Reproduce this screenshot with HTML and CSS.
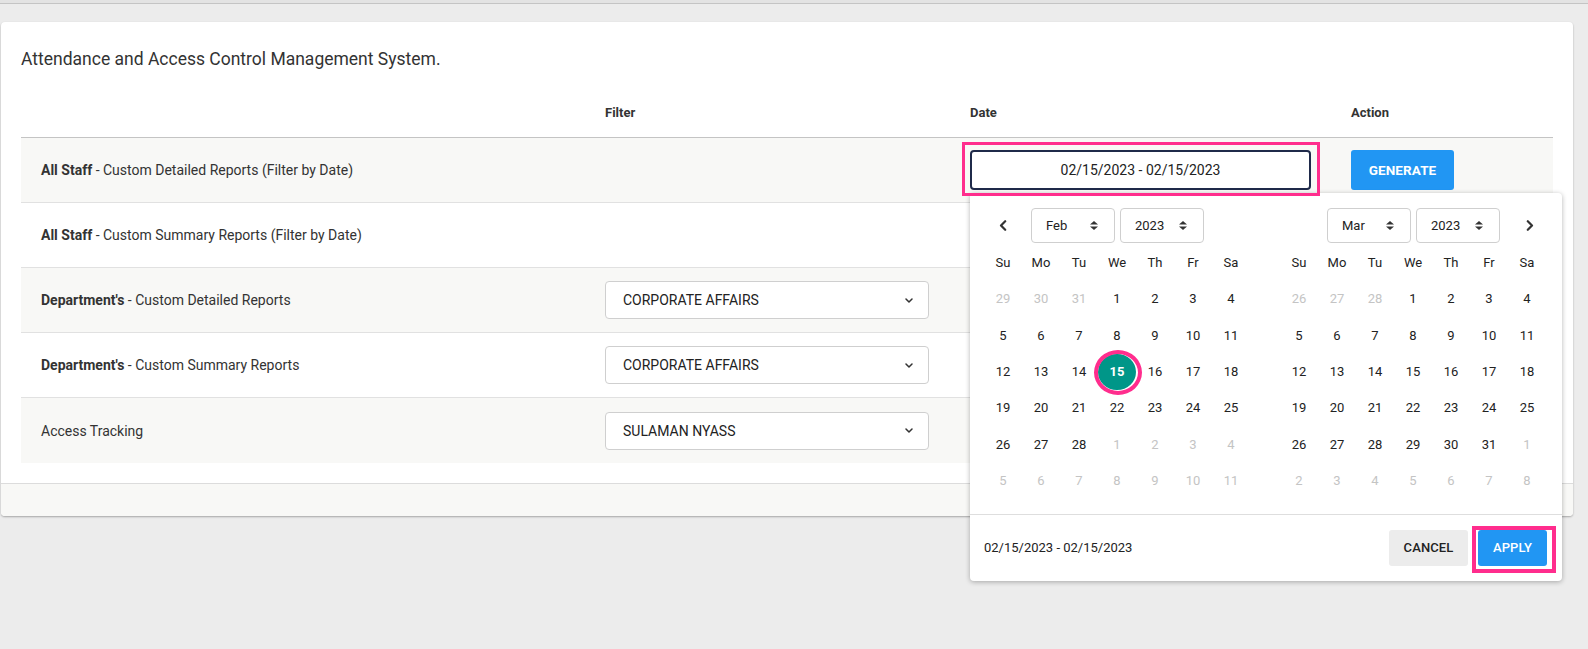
FILE: index.html
```html
<!DOCTYPE html>
<html lang="en">
<head>
<meta charset="utf-8">
<title>Attendance and Access Control Management System</title>
<link rel="stylesheet" href="styles.css">
</head>
<body>
<div class="topbar"></div>
<main class="page">
  <section class="card">
    <div class="card-body">
      <h1 class="title">Attendance and Access Control Management System.</h1>
      <div class="table">
        <div class="grid thead">
          <div class="th"></div>
          <div class="th">Filter</div>
          <div class="th">Date</div>
          <div class="th">Action</div>
        </div>

        <div class="grid trow striped">
          <div class="td"><b>All Staff</b> - Custom Detailed Reports (Filter by Date)</div>
          <div class="td"></div>
          <div class="td date-cell">
            <div class="date-input">02/15/2023 - 02/15/2023</div>
            <div class="mark mark-input"></div>

            <div class="picker">
              <div class="cals">
                <div class="cal">
                  <div class="cal-nav">
                    <div class="nav-slot">
                      <svg width="8" height="11" viewBox="0 0 8 11"><polyline points="6.2,1.2 2,5.5 6.2,9.8" fill="none" stroke="#333" stroke-width="2.2" stroke-linecap="round" stroke-linejoin="round"/></svg>
                    </div>
                    <div class="msel sel-month"><span>Feb</span><svg class="updown" width="8" height="9" viewBox="0 0 8 9"><polygon points="0,3.6 4,0 8,3.6" fill="#333"/><polygon points="0,5.4 4,9 8,5.4" fill="#333"/></svg></div>
                    <div class="msel sel-year"><span>2023</span><svg class="updown" width="8" height="9" viewBox="0 0 8 9"><polygon points="0,3.6 4,0 8,3.6" fill="#333"/><polygon points="0,5.4 4,9 8,5.4" fill="#333"/></svg></div>
                    <div class="spacer"></div>
                    <div class="nav-slot"></div>
                  </div>
                  <div class="cal-grid">
                    <span class="dow">Su</span><span class="dow">Mo</span><span class="dow">Tu</span><span class="dow">We</span><span class="dow">Th</span><span class="dow">Fr</span><span class="dow">Sa</span>
                    <span class="off">29</span><span class="off">30</span><span class="off">31</span><span>1</span><span>2</span><span>3</span><span>4</span>
                    <span>5</span><span>6</span><span>7</span><span>8</span><span>9</span><span>10</span><span>11</span>
                    <span>12</span><span>13</span><span>14</span><span class="sel">15<i class="mark mark-day"></i></span><span>16</span><span>17</span><span>18</span>
                    <span>19</span><span>20</span><span>21</span><span>22</span><span>23</span><span>24</span><span>25</span>
                    <span>26</span><span>27</span><span>28</span><span class="off">1</span><span class="off">2</span><span class="off">3</span><span class="off">4</span>
                    <span class="off">5</span><span class="off">6</span><span class="off">7</span><span class="off">8</span><span class="off">9</span><span class="off">10</span><span class="off">11</span>
                  </div>
                </div>

                <div class="cal">
                  <div class="cal-nav">
                    <div class="nav-slot"></div>
                    <div class="msel sel-month"><span>Mar</span><svg class="updown" width="8" height="9" viewBox="0 0 8 9"><polygon points="0,3.6 4,0 8,3.6" fill="#333"/><polygon points="0,5.4 4,9 8,5.4" fill="#333"/></svg></div>
                    <div class="msel sel-year"><span>2023</span><svg class="updown" width="8" height="9" viewBox="0 0 8 9"><polygon points="0,3.6 4,0 8,3.6" fill="#333"/><polygon points="0,5.4 4,9 8,5.4" fill="#333"/></svg></div>
                    <div class="spacer"></div>
                    <div class="nav-slot next">
                      <svg width="8" height="11" viewBox="0 0 8 11"><polyline points="1.8,1.2 6,5.5 1.8,9.8" fill="none" stroke="#333" stroke-width="2.2" stroke-linecap="round" stroke-linejoin="round"/></svg>
                    </div>
                  </div>
                  <div class="cal-grid">
                    <span class="dow">Su</span><span class="dow">Mo</span><span class="dow">Tu</span><span class="dow">We</span><span class="dow">Th</span><span class="dow">Fr</span><span class="dow">Sa</span>
                    <span class="off">26</span><span class="off">27</span><span class="off">28</span><span>1</span><span>2</span><span>3</span><span>4</span>
                    <span>5</span><span>6</span><span>7</span><span>8</span><span>9</span><span>10</span><span>11</span>
                    <span>12</span><span>13</span><span>14</span><span>15</span><span>16</span><span>17</span><span>18</span>
                    <span>19</span><span>20</span><span>21</span><span>22</span><span>23</span><span>24</span><span>25</span>
                    <span>26</span><span>27</span><span>28</span><span>29</span><span>30</span><span>31</span><span class="off">1</span>
                    <span class="off">2</span><span class="off">3</span><span class="off">4</span><span class="off">5</span><span class="off">6</span><span class="off">7</span><span class="off">8</span>
                  </div>
                </div>
              </div>
              <div class="picker-foot">
                <span class="range">02/15/2023 - 02/15/2023</span>
                <span class="btn btn-cancel">CANCEL</span>
                <span class="btn btn-apply">APPLY</span>
                <div class="mark mark-apply"></div>
              </div>
            </div>
          </div>
          <div class="td"><span class="btn btn-generate">GENERATE</span></div>
        </div>

        <div class="grid trow">
          <div class="td"><b>All Staff</b> - Custom Summary Reports (Filter by Date)</div>
          <div class="td"></div>
          <div class="td"></div>
          <div class="td"></div>
        </div>

        <div class="grid trow striped">
          <div class="td"><b>Department's</b> - Custom Detailed Reports</div>
          <div class="td">
            <div class="dd"><span>CORPORATE AFFAIRS</span><svg width="8" height="5" viewBox="0 0 8 5"><polyline points="1,1 4,4 7,1" fill="none" stroke="#333" stroke-width="1.5" stroke-linecap="round" stroke-linejoin="round"/></svg></div>
          </div>
          <div class="td"></div>
          <div class="td"></div>
        </div>

        <div class="grid trow">
          <div class="td"><b>Department's</b> - Custom Summary Reports</div>
          <div class="td">
            <div class="dd"><span>CORPORATE AFFAIRS</span><svg width="8" height="5" viewBox="0 0 8 5"><polyline points="1,1 4,4 7,1" fill="none" stroke="#333" stroke-width="1.5" stroke-linecap="round" stroke-linejoin="round"/></svg></div>
          </div>
          <div class="td"></div>
          <div class="td"></div>
        </div>

        <div class="grid trow striped">
          <div class="td">Access Tracking</div>
          <div class="td">
            <div class="dd"><span>SULAMAN NYASS</span><svg width="8" height="5" viewBox="0 0 8 5"><polyline points="1,1 4,4 7,1" fill="none" stroke="#333" stroke-width="1.5" stroke-linecap="round" stroke-linejoin="round"/></svg></div>
          </div>
          <div class="td"></div>
          <div class="td"></div>
        </div>
      </div>
    </div>
    <div class="card-footer"></div>
  </section>
</main>
</body>
</html>
```

FILE: styles.css
```css
html, body {
  margin: 0;
  padding: 0;
}

body {
  min-height: 100vh;
  background: #ececec;
  font-family: Roboto, "Liberation Sans", Arial, sans-serif;
  color: #333;
}

.topbar {
  height: 3px;
  background: #e3e3e3;
  border-bottom: 1px solid #c4c4c4;
}

.page {
  padding: 18px 15px 0 1px;
}

.card {
  background: #fff;
  border-radius: 4px;
  box-shadow: 0 1px 2px rgba(0, 0, 0, 0.3);
}

.card-body {
  padding: 25px 20px 20px;
}

.title {
  margin: 0;
  font-size: 17.5px;
  font-weight: 400;
  line-height: 24px;
  color: #333;
}

.grid {
  display: grid;
  grid-template-columns: 564px 365px 381px 1fr;
}

.thead {
  margin-top: 33px;
  border-bottom: 1px solid #c4c4c4;
}

.th {
  padding: 0 20px 15px;
  font-size: 13px;
  font-weight: 700;
  line-height: 18px;
  color: #333;
}

.trow {
  height: 64px;
  align-items: center;
  border-bottom: 1px solid #e1e1e1;
}

.trow:last-child {
  height: 65px;
  border-bottom: 0;
}

.striped {
  background: #f8f8f6;
}

.td {
  padding: 0 20px;
  font-size: 14px;
  line-height: 18px;
  color: #333;
}

.td b {
  font-weight: 700;
}

.dd {
  width: 324px;
  height: 38px;
  box-sizing: border-box;
  border: 1px solid #cfcfcf;
  border-radius: 4px;
  background: #fff;
  display: flex;
  align-items: center;
  justify-content: space-between;
  padding: 0 15px 0 17px;
  font-size: 14px;
  color: #222;
}

.dd svg {
  display: block;
}

.date-cell {
  position: relative;
}

.date-input {
  width: 341px;
  height: 40px;
  box-sizing: border-box;
  border: 2px solid #1f2a4a;
  border-radius: 4px;
  background: #fff;
  display: flex;
  align-items: center;
  justify-content: center;
  font-size: 14px;
  color: #222;
}

.mark {
  position: absolute;
  box-sizing: border-box;
  border: 3px solid #ff2d8d;
  z-index: 20;
  pointer-events: none;
}

.mark-input {
  left: 12px;
  top: -8px;
  width: 358px;
  height: 54px;
}

.btn {
  display: inline-flex;
  align-items: center;
  justify-content: center;
  box-sizing: border-box;
  border-radius: 3px;
  font-size: 13px;
  font-weight: 700;
  letter-spacing: 0.1px;
}

.btn-generate {
  width: 103px;
  height: 40px;
  background: #2196f3;
  color: #fff;
  font-size: 13.5px;
}

/* date picker */
.picker {
  position: absolute;
  left: 20px;
  top: 43px;
  width: 592px;
  background: #fff;
  border-radius: 4px;
  box-shadow: 0 1px 5px rgba(0, 0, 0, 0.3);
  z-index: 10;
}

.cals {
  display: flex;
  gap: 30px;
  padding: 15px 16px 15px 14px;
}

.cal {
  width: 266px;
}

.cal-nav {
  display: flex;
  align-items: center;
  height: 35px;
  margin-bottom: 2px;
}

.nav-slot {
  width: 38px;
  height: 35px;
  display: flex;
  align-items: center;
  justify-content: center;
}

.nav-slot.next {
  padding-left: 6px;
  box-sizing: border-box;
}

.nav-slot svg {
  display: block;
}

.msel {
  width: 84px;
  height: 35px;
  box-sizing: border-box;
  border: 1px solid #cfcfcf;
  border-radius: 4px;
  display: flex;
  align-items: center;
  justify-content: space-between;
  padding: 0 16px 0 14px;
  font-size: 13px;
  color: #222;
}

.updown {
  display: block;
}

.sel-month {
  margin-left: 9px;
}

.sel-year {
  margin-left: 5px;
}

.spacer {
  flex: 1;
}

.cal-grid {
  display: grid;
  grid-template-columns: repeat(7, 38px);
  grid-auto-rows: 36.3px;
}

.cal-grid span {
  position: relative;
  display: flex;
  align-items: center;
  justify-content: center;
  font-size: 13px;
  color: #222;
}

.cal-grid span.off {
  color: #c4c4c4;
}

.cal-grid span.sel {
  background: #009688;
  color: #fff;
  font-weight: 700;
  border-radius: 50%;
}

.mark-day {
  left: -4px;
  top: -4px;
  width: 48px;
  height: 45px;
  border-width: 4px;
  border-radius: 50%;
}

.picker-foot {
  position: relative;
  display: flex;
  align-items: center;
  border-top: 1px solid #dedede;
  padding: 15px 15px 15px 14px;
}

.range {
  flex: 1;
  font-size: 13px;
  color: #222;
}

.btn-cancel {
  width: 79px;
  height: 36px;
  background: #ececec;
  color: #222;
  font-weight: 500;
}

.btn-apply {
  width: 69px;
  height: 36px;
  margin-left: 10px;
  background: #2196f3;
  color: #fff;
  font-weight: 500;
}

.mark-apply {
  right: 6px;
  top: 11px;
  width: 84px;
  height: 47px;
  border-width: 4px;
}

.card-footer {
  height: 32px;
  border-top: 1px solid #dcdcdc;
  background: #f8f8f6;
  border-radius: 0 0 4px 4px;
}
```
